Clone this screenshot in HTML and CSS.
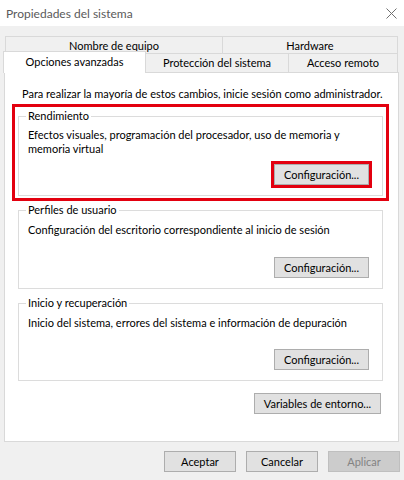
FILE: index.html
```html
<!DOCTYPE html>
<html lang="es">
<head>
<meta charset="utf-8">
<title>Propiedades del sistema</title>
<link rel="stylesheet" href="styles.css">
</head>
<body>
<div class="titlebar">
  <span class="title">Propiedades del sistema</span>
  <svg class="close" width="11" height="11" viewBox="0 0 11 11"><path d="M0.5 0.5 L10.5 10.5 M10.5 0.5 L0.5 10.5" stroke="#707070" stroke-width="1" fill="none"/></svg>
</div>
<div class="client">
  <div class="tabs">
    <div class="tabrow row1">
      <div class="tab t-nombre">Nombre de equipo</div>
      <div class="tab t-hard">Hardware</div>
    </div>
    <div class="tabrow row2">
      <div class="tab selected">Opciones avanzadas</div>
      <div class="tab t-prot">Protección del sistema</div>
      <div class="tab t-acc">Acceso remoto</div>
    </div>
  </div>
  <div class="panel">
    <p class="intro">Para realizar la mayoría de estos cambios, inicie sesión como administrador.</p>
    <div class="highlight">
      <fieldset class="group g1">
        <legend>Rendimiento</legend>
        <p class="gtext">Efectos visuales, programación del procesador, uso de memoria y<br>memoria virtual</p>
        <div class="btnrow"><button class="btn cfg marked">Configuración...</button></div>
      </fieldset>
    </div>
    <fieldset class="group g2">
      <legend>Perfiles de usuario</legend>
      <p class="gtext">Configuración del escritorio correspondiente al inicio de sesión</p>
      <div class="btnrow"><button class="btn cfg">Configuración...</button></div>
    </fieldset>
    <fieldset class="group g3">
      <legend>Inicio y recuperación</legend>
      <p class="gtext">Inicio del sistema, errores del sistema e información de depuración</p>
      <div class="btnrow"><button class="btn cfg">Configuración...</button></div>
    </fieldset>
    <div class="envrow"><button class="btn env">Variables de entorno...</button></div>
  </div>
  <div class="footer">
    <button class="btn foot">Aceptar</button>
    <button class="btn foot">Cancelar</button>
    <button class="btn foot disabled">Aplicar</button>
  </div>
</div>
</body>
</html>
```
FILE: styles.css
```css
* { box-sizing: border-box; }
html, body { margin: 0; padding: 0; }
body {
  width: 404px;
  height: 480px;
  background: #f0f0f0;
  font-family: Lato, "Liberation Sans", Arial, sans-serif;
  font-size: 11px;
  line-height: 14px;
  color: #000;
  overflow: hidden;
}
.titlebar {
  height: 26px;
  background: #fff;
  display: flex;
  align-items: center;
  justify-content: space-between;
  padding: 0 7px 0 6px;
}
.title {
  font-size: 12px;
  color: #5a5a5a;
  line-height: 16px;
  margin-top: 1px;
}
.close { display: block; margin-top: 0; }

.client { padding: 10px 4px 0 0; }

.tabs { margin-left: 5px; margin-right: 2px; }
.tabrow { display: flex; }
.tab {
  border-top: 1px solid #d9d9d9;
  border-right: 1px solid #d9d9d9;
  background: #f0f0f0;
  text-align: center;
  white-space: nowrap;
}
.row1 { height: 17px; }
.row1 .tab { line-height: 17px; }
.t-nombre { width: 218px; border-left: 1px solid #d9d9d9; }
.t-hard { flex: 1; }
.row2 { height: 19px; }
.row2 .tab { line-height: 18px; }
.selected {
  position: relative;
  z-index: 1;
  width: 143px;
  height: 22px;
  margin: -2px 0 0 -2px;
  background: #fff;
  border-left: 1px solid #d9d9d9;
  line-height: 20px !important;
}
.t-prot { width: 143px; }
.t-acc { flex: 1; }

.panel {
  margin-left: 4px;
  margin-right: 1px;
  background: #fff;
  border: 1px solid #d9d9d9;
  padding: 14px 15px 27px 13px;
}
.intro { margin: 0 0 3px 4px; white-space: nowrap; }

.highlight {
  border: 3px solid #e3000f;
  padding: 2px 3px 2px 3px;
  margin: 0 -6px;
}
.group {
  margin: 0;
  border: 1px solid #dcdcdc;
  padding: 0 13px 0 9px;
  min-width: 0;
}
.group legend {
  padding: 0 2px;
  margin-left: -2px;
  line-height: 14px;
}
.gtext { margin: 6px 0 0 0; white-space: nowrap; }
.btnrow { display: flex; justify-content: flex-end; }
.btn {
  font-family: inherit;
  font-size: 11px;
  line-height: 14px;
  color: #000;
  background: #e1e1e1;
  border: 1px solid #adadad;
  height: 21px;
  padding: 0;
  margin: 0;
  border-radius: 0;
}
.cfg { width: 95px; }
.g1 .btnrow { margin-top: 8px; padding-bottom: 10px; }
.g1 .gtext { margin-top: 5px; }
.marked { outline: 3px solid #e3000f; outline-offset: 0; }
.g2 { margin-top: 2px; }
.g2 .btnrow { margin-top: 20px; padding-bottom: 10px; }
.g3 { margin-top: 7px; }
.g3 .btnrow { margin-top: 19px; padding-bottom: 10px; }
.envrow { display: flex; justify-content: flex-end; margin-top: 12px; padding-right: 2px; }
.env { width: 127px; }

.footer {
  display: flex;
  justify-content: flex-end;
  gap: 10px;
  margin-top: 9px;
}
.foot { width: 72px; }
.disabled { background: #cccccc; border-color: #bfbfbf; color: #838383; }
```
